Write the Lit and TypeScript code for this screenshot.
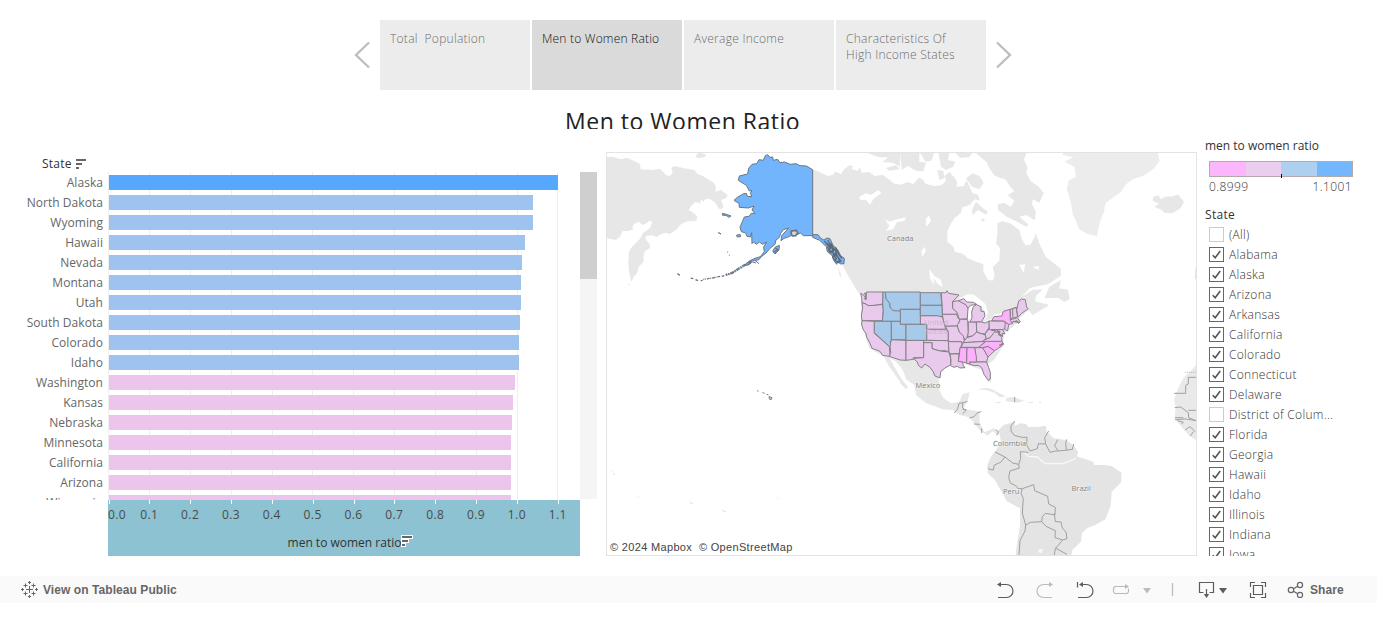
import { LitElement, html, svg, css } from "lit";
import { customElement } from "lit/decorators.js";
import { classMap } from "lit/directives/class-map.js";

const BARS: [string, number, string][] = [
  ["Alaska", 449, "top"], ["North Dakota", 424, "high"], ["Wyoming", 424, "high"],
  ["Hawaii", 416, "high"], ["Nevada", 413, "high"], ["Montana", 412, "high"],
  ["Utah", 412, "high"], ["South Dakota", 411, "high"], ["Colorado", 410, "high"],
  ["Idaho", 410, "high"], ["Washington", 406, "low"], ["Kansas", 404, "low"],
  ["Nebraska", 403, "low"], ["Minnesota", 402, "low"], ["California", 402, "low"],
  ["Arizona", 402, "low"], ["Wisconsin", 402, "low"],
];
const TICKS = ["0.0", "0.1", "0.2", "0.3", "0.4", "0.5", "0.6", "0.7", "0.8", "0.9", "1.0", "1.1"];
const FILTER: [string, boolean][] = [
  ["(All)", false], ["Alabama", true], ["Alaska", true], ["Arizona", true], ["Arkansas", true],
  ["California", true], ["Colorado", true], ["Connecticut", true], ["Delaware", true],
  ["District of Colum...", false], ["Florida", true], ["Georgia", true], ["Hawaii", true],
  ["Idaho", true], ["Illinois", true], ["Indiana", true], ["Iowa", true],
];

// State outlines, three units per pixel, origin at (850, 280).
const LILAC = [
  "32 40 40 44 47 54 49 36 99 36 98 72 75 76 55 77 45 71 36 68 35 55",
  "36 68 45 71 55 77 75 76 98 73 100 90 97 122 36 122 34 105 38 85",
  "36 122 73 124 73 160 118 200 120 225 118 229 98 226 90 214 66 205 60 190 50 172 48 160 40 150 35 135",
  "124 179 168 181 168 241 150 240 118 229 122 218 120 197",
  "168 181 221 181 221 233 190 233 190 238 168 241",
  "211 107 265 107 278 111 286 143 288 148 230 148 230 133 211 133",
  "230 148 288 148 295 157 295 182 230 181",
  "221 181 295 182 297 215 285 212 270 213 246 206 246 188 221 188",
  "221 188 246 188 246 206 270 213 297 216 302 235 302 255 285 264 272 275 270 294 255 288 250 276 240 262 225 252 215 264 205 256 202 246 190 235 221 233",
  "274 38 288 38 291 32 296 40 327 45 308 65 308 85 322 97 322 103 277 103 276 76",
  "277 103 320 103 323 113 330 120 322 138 286 139 280 120",
  "286 139 322 138 328 156 340 166 343 182 336 190 334 185 295 185 295 155",
  "295 185 334 185 336 192 329 210 329 220 300 222 297 215",
  "300 222 327 222 325 244 338 245 339 255 345 263 330 264 322 259 312 262 302 257 303 240",
  "308 65 325 62 348 74 354 85 352 116 328 118 321 97 308 85",
  "328 118 353 118 355 160 350 174 345 183 340 168 328 156 322 138 330 120",
  "365 96 370 80 380 74 393 80 393 94 402 94 405 108 394 126 360 126 366 112",
  "325 62 342 56 350 66 370 67 380 73 362 76 354 85 347 74",
  "355 126 379 127 380 156 368 168 353 170 355 155",
  "379 126 394 126 405 129 417 123 418 141 405 162 390 160 380 155",
  "342 184 350 173 368 168 380 156 390 160 405 164 409 175 396 185 342 188",
  "340 188 408 184 386 202 333 202",
  "374 203 398 203 414 230 410 246 379 246",
  "358 246 410 246 416 263 421 277 421 298 415 301 402 283 395 263 385 256 373 257 358 252",
  "396 185 409 177 420 173 432 155 448 158 455 173 456 185",
  "405 162 418 146 426 152 437 151 432 158 420 173 409 177",
  "417 123 460 123 468 130 466 145 458 149 418 149",
  "480 88 500 82 500 93 490 112 480 119 482 100",
  "488 86 498 82 503 110 489 115 488 99",
  "500 90 506 63 515 57 526 59 530 82 535 86 515 100 504 111",
  "480 120 502 113 511 126 505 130 501 122 480 129",
  "466 127 476 131 473 153 464 148",
  "426 149 458 149 465 162 456 160 458 170 448 160 437 152",
];
const PINK = [
  "425 122 432 110 455 108 460 94 480 88 481 121 488 131 475 133 462 123",
  "398 203 414 199 434 212 414 231",
  "386 202 408 184 456 184 461 193 446 204 434 212 414 199 398 203",
  "330 203 351 203 350 249 338 246 325 244 328 225",
  "351 203 374 203 379 230 379 246 358 246 360 252 350 250",
];
const BLUE = [
  "99 36 106 36 108 55 119 69 121 82 130 92 148 90 152 96 152 124 97 124 100 95 98 72",
  "106 36 211 36 211 88 151 88 148 93 130 92 121 84 119 70 108 56",
  "151 88 211 88 211 133 151 133",
  "73 124 124 124 124 179 121 186 122 196 118 199 73 158",
  "124 124 151 124 151 133 168 133 168 179 124 179",
  "168 133 230 133 230 181 168 181",
  "211 38 272 38 276 76 211 76",
  "211 76 276 76 277 111 263 107 211 107",
];

const shapes = (list: string[], fill: string) =>
  list.map((p) => svg`<polygon points=${p} fill=${fill}></polygon>`);

const sortIcon = (halo = false) => svg`<svg class="sort" width="13" height="13" viewBox="0 0 13 13">
  ${halo ? svg`<path d="M0 0H12V4H8V8H5V12H0Z" fill="#fff"/>` : ""}
  <path d="M1 1H11V3H1ZM1 5H7V7H1ZM1 9H4V11H1Z" fill="#666"/></svg>`;

@customElement("world-map")
class WorldMap extends LitElement {
  static styles = css`
    :host { display: block; width: 589px; height: 402px; border: 1px solid #e3e3e3; }
    svg { display: block; }
    .label { font: 400 7.5px "Open Sans", sans-serif; letter-spacing: 0; fill: #808080; stroke: #f1f1f1; stroke-width: 1.2px; paint-order: stroke; }
    .faint { fill: #cfb3d3; stroke: none; font-size: 7.8px; }
    .credit { font: 11px "Liberation Sans", sans-serif; fill: #444; letter-spacing: 0.33px; }
  `;
  render() {
    return html`<svg width="589" height="402" viewBox="607 153 589 402">
      <g transform="translate(606 150) scale(.33333)" fill="#e7e7e7">
        <path d="M0 22L20 20 45 28 62 23 90 35 102 42 104 58 140 60 162 56 172 66 180 76 192 78 200 68 196 54 205 48 235 55 265 60 275 72 290 78 310 90 325 100 330 112 328 125 345 120 365 136 360 145 345 150 350 162 352 175 340 177 332 165 325 155 312 148 300 146 292 155 285 148 283 160 268 156 255 168 248 180 262 188 273 198 272 212 255 213 240 215 225 223 210 240 190 253 182 248 165 252 150 262 140 256 120 258 118 266 131 283 132 294 117 303 112 320 113 335 98 350 93 370 83 380 76 396 70 370 67 340 69 305 78 290 102 266 112 248 132 234 139 215 130 212 119 221 108 225 100 215 85 221 78 232 83 238 65 243 50 242 42 260 30 270 0 264Z"/>
        <path d="M270 15L280 8 296 12 300 19 285 24 272 23ZM64 408L70 400 72 404Z"/>
        <path d="M620 58L640 65 665 78 680 75 688 65 705 72 714 58 730 46 740 48 738 58 755 62 762 52 766 68 790 66 805 78 830 75 845 85 862 100 882 104 905 96 922 102 937 84 948 86 960 102 985 108 1008 105 1020 92 1015 78 1030 66 1047 84 1054 98 1050 110 1074 108 1081 90 1091 110 1100 130 1116 135 1122 152 1106 148 1090 165 1070 172 1064 190 1045 205 1032 225 1024 245 1024 275 1042 290 1047 305 1070 311 1085 324 1110 335 1132 342 1132 365 1146 389 1160 392 1166 376 1160 352 1180 332 1182 295 1170 280 1174 257 1174 220 1188 214 1212 220 1240 240 1246 265 1258 285 1272 286 1285 264 1289 250 1300 281 1320 322 1350 344 1365 358 1364 378 1345 390 1325 403 1272 414 1247 440 1280 419 1310 418 1290 438 1288 454 1316 461 1304 473 1278 490 1265 480 1252 495 1240 505 1240 515 1220 530 1195 550 1190 590 1164 630 1140 645 1155 695 1145 693 1128 660 1070 640 1020 645 998 680 1000 720 1012 743 1035 760 1060 755 1070 732 1091 727 1085 753 1070 778 1120 784 1121 820 1135 847 1165 835 1180 848 1176 855 1160 844 1145 857 1120 840 1090 802 1060 795 1040 780 1010 778 960 759 930 735 925 705 902 690 890 660 870 635 852 625 865 650 885 685 907 712 898 717 870 678 850 650 832 619 790 595 765 520 766 425 740 400 722 370 710 345 705 320 655 268 620 256Z"/>
        <path d="M695 352L705 372 703 385ZM738 400L770 427 760 431ZM780 8H882V50L860 38 830 36 846 22 820 22ZM840 54L870 46 882 58 850 62ZM882 8H940V35L960 38 952 64 930 62 905 47 888 60ZM942 8H985L976 32 958 35 950 20ZM997 8H1030L1026 30 1048 35 1042 50 1020 60 1005 50ZM994 60L1012 62 1015 85 1000 90ZM1048 8H1100L1088 22 1062 23ZM1080 85L1100 70 1120 78 1133 98 1120 118 1098 110Z"/>
        <path d="M1108 8H1262L1254 28 1264 52 1261 70 1275 94 1298 110 1313 130 1300 158 1280 148 1278 162 1289 184 1287 211 1260 195 1240 200 1266 222 1264 232 1240 219 1200 199 1176 180 1175 163 1195 158 1214 170 1225 153 1205 135 1225 124 1211 108 1198 88 1180 83 1164 75 1150 55 1141 35Z"/>
        <path d="M1110 155L1131 175 1146 185 1140 194 1116 180 1100 196 1098 180ZM1124 206L1138 206 1130 216ZM1330 410L1365 390 1360 415 1386 419 1391 448 1375 456 1358 444 1315 445ZM1272 487L1322 460 1327 467 1280 495Z"/>
        <path d="M1370 8H1655L1661 33 1642 57 1610 79 1580 88 1560 103 1545 126 1510 151 1498 161 1494 185 1482 215 1476 240 1473 259 1444 252 1420 238 1410 212 1400 192 1395 157 1382 118 1389 90 1410 81 1405 50 1376 35 1400 22 1370 14Z" fill="#ececec"/>
        <path d="M1642 140L1657 136 1665 148 1677 140 1702 139 1716 133 1734 156 1724 174 1700 190 1676 189 1666 179 1645 170 1660 161 1640 152ZM1768 354H1773V390L1766 386Z"/>
      </g>
      <g transform="translate(606 150) scale(.33333)" fill="#fff">
        <path d="M760 140L780 130 795 135 817 120 826 130 803 146 792 164 779 149 763 151ZM836 208L852 215 866 210 900 202 895 213 873 216 862 238 840 242 850 227ZM970 195L975 214 961 230 960 207ZM955 290L960 302 949 320 946 305ZM970 358L985 378 1005 390 1010 411 995 401 983 383 984 404 972 385ZM1240 345L1258 343 1253 368ZM1280 350L1300 348 1297 360Z"/>
      </g>
      <g transform="translate(850 280) scale(.33333)" fill="#fff">
        <path d="M325 58L352 43 372 44 392 60 406 72 414 98 409 113 394 126 404 94 392 78 378 75 364 91 366 111 358 127 351 112 355 84 372 71 348 67ZM394 130L410 121 426 116 432 105 456 99 458 108 435 112 428 124 405 132Z"/>
      </g>
      <g transform="translate(900 350) scale(.33333)" fill="#e7e7e7">
        <path d="M232 119L255 113 275 117 295 128 318 139 300 142 285 129 256 119ZM318 145L330 142 343 142 356 147 372 152 355 158 318 154ZM287 156H302V159H287ZM384 156H399V159H384ZM417 155H423V159H417ZM262 97L269 92 270 96ZM0 88L12 105 10 110 0 98Z"/>
        <path d="M296 240L310 225 330 220 345 213 344 228 360 220 378 222 385 231 410 231 438 227 440 245 461 265 498 270 520 285 534 305 531 320 550 325 580 335 582 345 612 345 635 348 664 368 664 396 635 426 632 468 616 508 587 524 562 534 546 550 543 575 517 600 514 615H347L350 590 360 525 360 475 320 453 302 420 284 389 263 369 262 345 273 320 288 301 303 275Z" fill="#e4e4e4"/>
        <path d="M888 45L875 60 850 85 833 118 822 150 827 172 824 205 845 230 870 259 888 270Z" fill="#e9e9e9"/>
        <path d="M370 305L385 319 412 321 435 341 490 341 528 325" fill="none" stroke="#f8f8f8" stroke-width="4"/>
        <path d="M414 607L417 598 428 596 426 609Z" fill="#f8f8f8"/>
        <path d="M345 213L333 227 333 243 343 256 365 262 381 262 380 284 390 303 412 296 415 281 437 282 434 263 446 243M437 282L450 307 466 303 475 303 496 301 517 298 521 282M475 303L464 287 473 269M499 301L497 280 500 268M285 306L315 321 338 339 356 343 362 325 361 305 385 307M315 321L302 337 283 345 280 360 268 358 266 353M356 343L358 354 330 363 326 382 331 399 350 409 354 416 367 416 401 404 404 422 443 439 446 462 466 472 465 495 436 490 427 500 425 515 391 517 377 525 367 489 370 446 363 430 367 416M425 515L438 529 466 542 465 563 488 570 501 566 498 546 487 534 483 516 466 515 463 490M377 525L375 543 360 572 357 615M488 570L466 596 463 615M466 594L501 613M163 189L173 177 177 160 190 158 202 154M188 158V174L198 181 188 192M188 178L200 180M208 204L222 200 232 189 244 185M222 222L240 223M245 234V249M288 240L296 245 290 256M344 141V157M822 130H857L857 106 865 102V82H888M824 173L842 171 865 188 866 203 888 212M865 181H888M825 203H850M825 209L858 207 888 212M832 212L850 217 844 222M855 240L870 230 880 239 885 245M880 245L871 258" fill="none" stroke="#a0a0a0" stroke-width="3"/>
        <path d="M855 67H888" fill="none" stroke="#c4c4c4" stroke-width="3" stroke-dasharray="4 2"/>
      </g>
      <g transform="translate(850 280) scale(.33333)" stroke="#858087" stroke-width="3" stroke-linejoin="round">
        ${shapes(LILAC, "#e9caed")}${shapes(PINK, "#fdb1fd")}${shapes(BLUE, "#a8caea")}
        <path d="M42 40L48 42 48 58 43 55M441 152L449 155 446 164 454 168M489 124L507 127M448 196L460 190" fill="none" stroke-width="4"/>
      </g>
      <g transform="translate(606 150) scale(.33333)" fill="#73b5fc" stroke="#6b7480" stroke-width="3" stroke-linejoin="round">
        <path d="M485 14L492 22 500 21 502 31 515 28 522 38 535 36 553 43 570 41 582 47 601 48 620 59V257L592 257 583 249 574 254 566 243 555 241 558 255 545 262 534 265 525 272 527 257 537 246 548 234 532 239 524 250 520 262 510 270 507 283 492 295 480 309 465 321 459 329 440 333 430 344 415 347 430 333 447 325 463 320 475 305 473 291 482 276 470 283 460 276 452 283 442 276 438 281 437 248 433 261 423 259 419 249 406 245 402 231 409 216 415 201 429 199 436 190 447 190 438 180 444 168 427 174 400 172 399 160 384 151 394 142 411 132 421 130 424 139 438 140 433 130 438 122 430 123 421 106 397 91 400 78 425 72 428 55 438 43 452 41 459 29 472 31 478 17Z"/>
        <path d="M620 254L636 254 643 264 654 270 663 264 672 266 681 286 695 299 704 317 715 325 714 341 703 342 696 333 692 343 683 331 679 317 664 305 661 290 650 280 641 271 620 262Z"/>
        <path d="M665 270L674 286 688 300 694 319 706 336M660 280L673 294 668 302 684 310 680 322 694 338M675 280L684 300 678 307 698 323 700 337M654 273L672 288 681 299 674 309M688 291L698 312 708 326M684 316L691 326 686 330M693 306L686 314M664 292L672 300 672 308M690 333L700 339" fill="none" stroke="#5f676f" stroke-width="4"/>
        <path d="M501 301L508 291 520 286 519 300 507 312 501 306ZM391 256L402 253 404 260 394 261ZM349 190L361 193 375 198 369 202 360 196 350 196ZM337 248L345 252ZM365 305L365 308M370 314L370 317M214 371L221 376M448 332L459 341M440 336L450 339"/>
        <path d="M557 243L571 241 575 248 569 257 559 258 555 250Z" fill="#d5d5d5" stroke-width="5"/>
        <path d="M508 294L516 299 506 305 512 308" fill="none" stroke-width="4"/>
        <path d="M438 334L420 343 400 355 378 369 359 375" fill="none" stroke-width="7" stroke-dasharray="12 2 5 2"/>
        <path d="M442 333L420 344 402 355 387 363" fill="none" stroke="#68a9ef" stroke-width="3" stroke-dasharray="8 7"/>
        <path d="M355 377L345 380M342 379L320 384 292 388M290 391L284 392M276 392L266 388M262 386L253 384M215 371L223 377" fill="none" stroke-width="4" stroke-dasharray="8 3 3 2"/>
      </g>
      <g fill="#ddc5e7" stroke="#77717d" stroke-width=".9">
        <path d="M757 390.5l1.5.8M762.5 392.5l2.2.9M766.5 394.3l2 .5M769 396.500l3 1.200-.8 2-1.800-.6z"/>
      </g>
      <path d="M958 324.500h1M611 471h1M613 474h2M690 502l3 2M777 498h1M722 510l4 2M638 497h1" stroke="#ddd"/>
      <text class="label" x="887" y="241">Canada</text>
      <text class="label" x="915.5" y="388">Mexico</text>
      <text class="label" x="993" y="445.5">Colombia</text>
      <text class="label" x="1003" y="494">Peru</text>
      <text class="label" x="1071.5" y="491">Brazil</text>
      <text class="label faint" x="924" y="324.5">United</text>
      <text class="label faint" x="925" y="334">States</text>
      <text class="credit" x="610" y="551">© 2024 Mapbox&#160; © OpenStreetMap</text>
    </svg>`;
  }
}

@customElement("app-root")
class AppRoot extends LitElement {
  static styles = css`
    :host { display: flex; flex-direction: column; height: 631px; overflow: hidden; background: #fff; color: #333;
      font: 300 12px/16px "Open Sans", sans-serif; letter-spacing: 0.3px; box-sizing: border-box; }
    svg { display: block; flex: none; }
    .story { display: flex; height: 70px; padding: 20px 0 0 354px; align-items: center; gap: 10px; }
    .points { display: flex; gap: 2px; height: 70px; }
    .point { width: 150px; box-sizing: border-box; padding: 11px 10px; background: #ececec; color: #6c6c6c; white-space: pre-line; letter-spacing: 0.27px; }
    .current { background: #dadada; color: #111; letter-spacing: 0.2px; }
    h1 { margin: 0; height: 39px; padding: 17px 0 0 565px; font: 400 23px/29px "Open Sans", sans-serif;
      letter-spacing: 0.52px; color: #222; overflow: hidden; box-sizing: border-box; white-space: nowrap; }
    .main { display: flex; height: 447px; }
    .chart { width: 597px; padding-top: 27px; height: 400px; letter-spacing: 0.05px; }
    .heading { display: flex; height: 16px; gap: 4px; padding-left: 42px; font-weight: 400; align-items: center; letter-spacing: 0.25px; }
    .heading .sort { margin-left: -1px; }
    .plot { display: flex; height: 328px; }
    .bars { position: relative; flex: 1; overflow: hidden; }
    .grid { position: absolute; inset: 0; }
    .bar-row { position: relative; display: flex; height: 15px; padding-top: 3px; padding-bottom: 2px; align-items: center; }
    .name { width: 103px; margin-right: 6px; text-align: right; color: #666; font-weight: 400; flex: none; white-space: nowrap; }
    .bar { height: 15px; }
    .top { background: #56a8ff; } .high { background: #9dc3ee; } .low { background: #ecc4ec; }
    .scroll { width: 17px; height: 327px; background: #f5f5f5; }
    .thumb { height: 107px; background: #cfcfcf; }
    .axis { margin-left: 108px; width: 472px; height: 56px; background: #8cc2d1; color: #333; }
    .ticks { display: flex; margin-left: -20px; letter-spacing: 0.4px; }
    .tick { width: 40.85px; text-align: center; position: relative; height: 27px; padding-top: 7px; box-sizing: border-box; flex: none; font-weight: 400; color: #4a4a4a; }
    .tick:first-child { text-indent: 17px; }
    .tick::before { content: ""; position: absolute; left: 20.5px; top: 0; width: 1px; height: 4px; background: #fff; }
    .axis-title { display: flex; justify-content: center; padding: 8px 0 0 12px; font-weight: 400; align-items: flex-start; margin-left: 2px; letter-spacing: 0; }
    .map { padding: 23px 8px 0 9px; }
    .legend { width: 170px; padding-top: 9px; height: 418px; overflow: hidden; color: #333; }
    .caption { font-weight: 400; height: 16px; letter-spacing: 0; }
    .state { margin-bottom: 1px; letter-spacing: 0.3px; }
    .ramp { display: flex; width: 142px; height: 14px; border: 1px solid #b3a9a6; margin: 7px 0 2px 4px; position: relative; }
    .ramp i { flex: 1; }
    .c1 { background: #fcb6fc; } .c2 { background: #ebcdee; } .c3 { background: #add0f0; } .c4 { background: #73b7ff; }
    .mid { position: absolute; left: 71px; bottom: -2px; width: 1px; height: 4px; background: #000; }
    .range { display: flex; justify-content: space-between; width: 143px; margin: 0 0 12px 4px; letter-spacing: 0.4px; }
    .check { display: flex; height: 20px; align-items: center; gap: 5px; padding-left: 4px; white-space: nowrap; }
    .check span { padding-top: 2px; }
    .footer { display: flex; align-items: center; width: 1377px; height: 27px; background: #fafafa; box-sizing: border-box; padding-left: 21px; color: #666;
      font: bold 12px "Liberation Sans", sans-serif; letter-spacing: 0.07px; }
    .view { margin-left: 5px; width: 949px; }
    .share { margin-left: 6px; }
  `;
  render() {
    const points = ["Total\u00a0 Population", "Men to Women Ratio", "Average Income", "Characteristics Of\nHigh Income States"];
    return html`
      <nav class="story">
        <svg width="16" height="28" viewBox="0 0 16 28"><path d="M15 1.5L2 14 15 26.5" fill="none" stroke="#bdbdbd" stroke-width="2.3"/></svg>
        <div class="points">${points.map((p, i) => html`<div class=${classMap({ point: true, current: i === 1 })}>${p}</div>`)}</div>
        <svg width="16" height="28" viewBox="0 0 16 28"><path d="M1 1.5L14 14 1 26.5" fill="none" stroke="#bdbdbd" stroke-width="2.3"/></svg>
      </nav>
      <h1>Men to Women Ratio</h1>
      <div class="main">
        <section class="chart">
          <div class="heading"><span>State</span>${sortIcon()}</div>
          <div class="plot">
            <div class="bars">
              <svg class="grid" width="580" height="328"><path d=${TICKS.map((_, i) => `M${Math.floor(108.6 + i * 40.85) + 0.5} 0V328`).join("")} stroke="#efefef"/></svg>
              ${BARS.map(([n, w, c]) => html`<div class="bar-row"><span class="name">${n}</span><span class="bar ${c}" style="width:${w}px"></span></div>`)}
            </div>
            <div class="scroll"><div class="thumb"></div></div>
          </div>
          <div class="axis">
            <div class="ticks">${TICKS.map((t) => html`<div class="tick">${t}</div>`)}</div>
            <div class="axis-title"><span>men to women ratio</span>${sortIcon(true)}</div>
          </div>
        </section>
        <section class="map"><world-map></world-map></section>
        <aside class="legend">
          <div class="caption">men to women ratio</div>
          <div class="ramp"><i class="c1"></i><i class="c2"></i><i class="c3"></i><i class="c4"></i><b class="mid"></b></div>
          <div class="range"><span>0.8999</span><span>1.1001</span></div>
          <div class="caption state">State</div>
          ${FILTER.map(([n, on]) => html`<label class="check">
            <svg width="15" height="15" viewBox="0 0 15 15"><rect x=".5" y=".5" width="14" height="14" fill="#fff" stroke=${on ? "#666" : "#ccc"}/>
            ${on ? svg`<path d="M3.7 8.2L6.2 10.8 11.2 4" fill="none" stroke="#555" stroke-width="1.6"/>` : ""}</svg><span>${n}</span></label>`)}
        </aside>
      </div>
      <footer class="footer">
        <svg width="17" height="17" viewBox="0 0 17 17"><path d="M8.5 5V12M5 8.5H12M8.5 0V3M7 1.5H10M8.5 14V17M7 15.5H10M1.5 7V10M0 8.5H3M15.5 7V10M14 8.5H17M4.5 2.5V6.5M2.5 4.5H6.5M12.5 2.5V6.5M10.5 4.5H14.5M4.5 10.5V14.5M2.5 12.5H6.5M12.5 10.5V14.5M10.5 12.5H14.5" stroke="#666"/></svg>
        <span class="view">View on Tableau Public</span>
        <svg width="295" height="27" viewBox="992 576 295 27" fill="none" stroke="#5c5c5c" stroke-width="1.2">
          <path d="M998 584.500H1006.500A6.200 6.200 0 0 1 1006.500 597.500H998"/>
          <path d="M997 584.500L1001 582V587Z" fill="#5c5c5c" stroke="none"/>
          <path d="M1052 584.500H1043.500A6.200 6.200 0 0 0 1043.500 597.500H1052" stroke="#bbb"/>
          <path d="M1053 584.500L1049 582V587Z" fill="#bbb" stroke="none"/>
          <path d="M1080 584.500H1086.500A6.200 6.200 0 0 1 1086.500 597.500H1078M1077.500 582V587.500"/>
          <path d="M1079 584.500L1083 582V587Z" fill="#5c5c5c" stroke="none"/>
          <path d="M1126 586.500H1116.500A2.500 2.500 0 0 0 1113.500 589V590.500A2.500 2.500 0 0 0 1116.500 593.500H1125.500A2.500 2.500 0 0 0 1128.500 590.500V588.500" stroke="#bbb"/>
          <path d="M1129 586.500L1125 584V589Z" fill="#bbb" stroke="none"/>
          <path d="M1143 588H1151L1147 593.500Z" fill="#bbb" stroke="none"/>
          <path d="M1172.500 583V596" stroke="#bbb"/>
          <path d="M1203.500 592.500H1199.500V582.500H1213.500V592.500H1209.500M1206.500 589V596"/>
          <path d="M1203.800 594H1209.200L1206.500 598Z" fill="#5c5c5c" stroke="none"/>
          <path d="M1219 588H1227L1223 593.500Z" fill="#5c5c5c" stroke="none"/>
          <path d="M1250.500 587V582.500H1255M1261 582.500H1265.500V587M1265.500 593V597.500H1261M1255 597.500H1250.500V593M1253.500 585.500H1262.500V594.500H1253.500Z"/>
        </svg>
        <svg width="17" height="17" viewBox="1287 581 17 17" fill="none" stroke="#666" stroke-width="1.200"><circle cx="1291" cy="590" r="2.700"/><circle cx="1300" cy="585" r="2.600"/><circle cx="1300" cy="595" r="2.600"/><path d="M1293.500 588.700L1297.700 586.200M1293.500 591.300L1297.700 593.800"/></svg>
        <span class="share">Share</span>
      </footer>`;
  }
}
